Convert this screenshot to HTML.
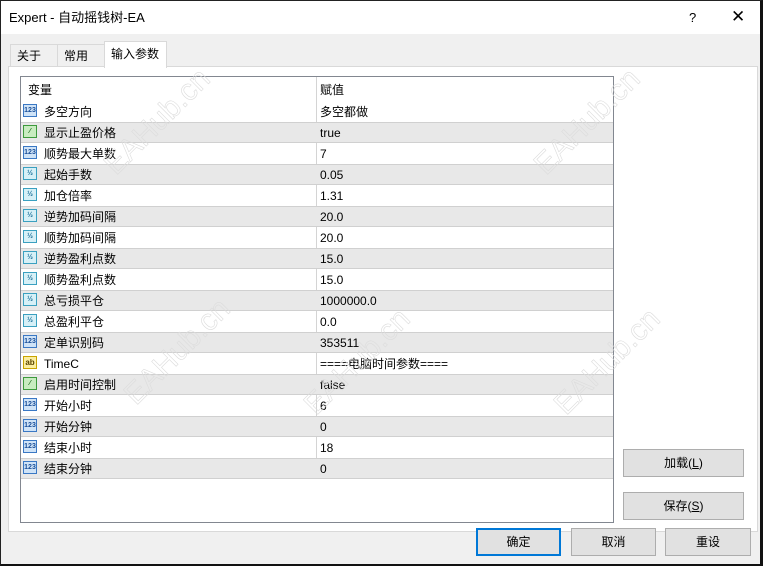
<!DOCTYPE html>
<html><head><meta charset="utf-8"><style>
*{box-sizing:border-box;margin:0;padding:0}
body{width:763px;height:566px;overflow:hidden;background:#f0f0f0;font-family:"Liberation Sans","Noto Sans CJK SC",sans-serif;font-size:12px;color:#000;position:relative;line-height:14px}
.frame{position:absolute;left:0;top:0;width:763px;height:566px;border-left:1px solid #222;border-right:3px solid #111;border-bottom:2px solid #111;border-top:1px solid #222}
.title{position:absolute;left:1px;top:1px;width:759px;height:33px;background:#fff}
.title span{position:absolute;left:8px;top:9px;font-size:13px;line-height:16px}
.q{position:absolute;left:688px;top:9px;font-size:13px;line-height:16px}
.x{position:absolute;left:730px;top:6px;font-size:17px;line-height:20px;font-weight:300}
.tab{position:absolute;top:44px;height:23px;background:#f0f0f0;border:1px solid #d9d9d9;border-bottom:none;padding-left:6px;line-height:22px;font-size:12px}
.panel{position:absolute;left:8px;top:66px;width:750px;height:466px;background:#fff;border:1px solid #d9d9d9}
.list{position:absolute;left:20px;top:76px;width:594px;height:447px;border:1px solid #828790;background:#fff;overflow:hidden}
.row{position:absolute;left:0;width:592px;height:21px;line-height:20px}
.row.g{background:#e8e8e8;border-top:1px solid #d0d0d0;border-bottom:1px solid #d0d0d0;line-height:18px}
.row .n{position:absolute;left:23px;top:1px}
.row .v{position:absolute;left:299px;top:1px}
.div{position:absolute;left:295px;top:0;width:1px;height:400px;background:#d4d4d4}
.ic{position:absolute;left:2px;top:3px;width:14px;height:13px;border:1px solid #3a78c4;background:#cfe3f7;font-size:7px;line-height:11px;text-align:center;color:#1a4f99;font-weight:bold}
.g .ic{top:2px}
.ic.c{border-color:#3d9a3d;background:#c8ecc0;color:#1d6b1d}
.ic.d{border-color:#3aa0c0;background:#d6f0f7;color:#1a6f99}
.ic.s{border-color:#c9a400;background:#fbeea0;color:#5a4400;font-size:8px}
.btn{position:absolute;background:#e1e1e1;border:1px solid #adadad;text-align:center;line-height:26px;font-size:12px}
.wm{position:absolute;font-size:30px;line-height:34px;transform:rotate(-45deg);font-family:"Liberation Sans",sans-serif;-webkit-text-stroke:0.6px #dcdcdc;color:transparent}
</style></head><body>
<div class="frame"></div>
<div class="title"><span>Expert - 自动摇钱树-EA</span><div class="q">?</div><div class="x">✕</div></div>
<div class="tab" style="left:10px;width:48px">关于</div>
<div class="tab" style="left:57px;width:48px">常用</div>
<div class="panel"></div>
<div class="tab" style="left:104px;width:63px;top:41px;height:27px;background:#fff;line-height:24px">输入参数</div>
<div class="list">
<div class="div"></div>
<div class="row" style="top:2px"><span class="n" style="left:7px">变量</span><span class="v">赋值</span></div>
<div class="row" style="top:24px"><div class="ic">123</div><span class="n">多空方向</span><span class="v">多空都做</span></div>
<div class="row g" style="top:45px"><div class="ic c">⁄</div><span class="n">显示止盈价格</span><span class="v">true</span></div>
<div class="row" style="top:66px"><div class="ic">123</div><span class="n">顺势最大单数</span><span class="v">7</span></div>
<div class="row g" style="top:87px"><div class="ic d">½</div><span class="n">起始手数</span><span class="v">0.05</span></div>
<div class="row" style="top:108px"><div class="ic d">½</div><span class="n">加仓倍率</span><span class="v">1.31</span></div>
<div class="row g" style="top:129px"><div class="ic d">½</div><span class="n">逆势加码间隔</span><span class="v">20.0</span></div>
<div class="row" style="top:150px"><div class="ic d">½</div><span class="n">顺势加码间隔</span><span class="v">20.0</span></div>
<div class="row g" style="top:171px"><div class="ic d">½</div><span class="n">逆势盈利点数</span><span class="v">15.0</span></div>
<div class="row" style="top:192px"><div class="ic d">½</div><span class="n">顺势盈利点数</span><span class="v">15.0</span></div>
<div class="row g" style="top:213px"><div class="ic d">½</div><span class="n">总亏损平仓</span><span class="v">1000000.0</span></div>
<div class="row" style="top:234px"><div class="ic d">½</div><span class="n">总盈利平仓</span><span class="v">0.0</span></div>
<div class="row g" style="top:255px"><div class="ic">123</div><span class="n">定单识别码</span><span class="v">353511</span></div>
<div class="row" style="top:276px"><div class="ic s">ab</div><span class="n">TimeC</span><span class="v">====电脑时间参数====</span></div>
<div class="row g" style="top:297px"><div class="ic c">⁄</div><span class="n">启用时间控制</span><span class="v">false</span></div>
<div class="row" style="top:318px"><div class="ic">123</div><span class="n">开始小时</span><span class="v">6</span></div>
<div class="row g" style="top:339px"><div class="ic">123</div><span class="n">开始分钟</span><span class="v">0</span></div>
<div class="row" style="top:360px"><div class="ic">123</div><span class="n">结束小时</span><span class="v">18</span></div>
<div class="row g" style="top:381px"><div class="ic">123</div><span class="n">结束分钟</span><span class="v">0</span></div>
</div>
<div class="wm" style="left:90px;top:105px">EAHub.cn</div>
<div class="wm" style="left:520px;top:105px">EAHub.cn</div>
<div class="wm" style="left:110px;top:335px">EAHub.cn</div>
<div class="wm" style="left:290px;top:345px">EAHub.cn</div>
<div class="wm" style="left:540px;top:345px">EAHub.cn</div>
<div class="btn" style="left:623px;top:449px;width:121px;height:28px">加载(<u>L</u>)</div>
<div class="btn" style="left:623px;top:492px;width:121px;height:28px">保存(<u>S</u>)</div>
<div class="btn" style="left:476px;top:528px;width:85px;height:28px;border:2px solid #0078d7;line-height:24px">确定</div>
<div class="btn" style="left:571px;top:528px;width:85px;height:28px">取消</div>
<div class="btn" style="left:665px;top:528px;width:86px;height:28px">重设</div>
</body></html>
